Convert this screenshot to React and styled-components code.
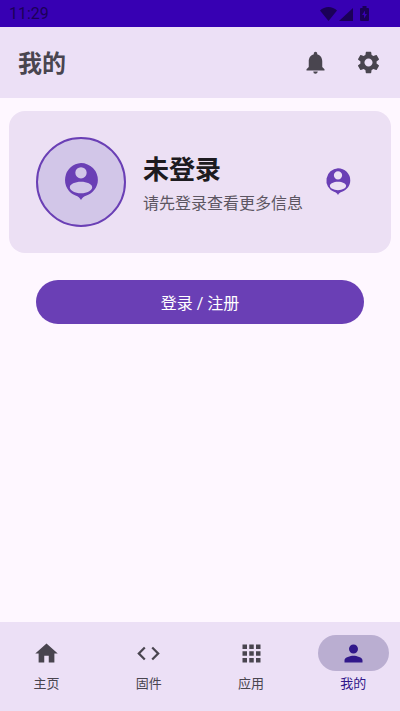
import React from 'react';
import styled, { createGlobalStyle } from 'styled-components';
import { MdApps, MdCode, MdHome, MdNotifications, MdPerson, MdSettings } from 'react-icons/md';

const tabs = [
  { label: '主页', icon: MdHome },
  { label: '固件', icon: MdCode },
  { label: '应用', icon: MdApps },
  { label: '我的', icon: MdPerson, active: true },
];

const PersonPin = ({ size }) => (
  <svg width={size} height={size} viewBox="0 0 24 24" fill="currentColor" aria-hidden="true">
    <path
      fillRule="evenodd"
      d="M12 1.700a9.200 9.200 0 0 1 9.200 9.200c0 3.900-2.700 7.200-6.200 8.500-1.500.5-2.300 1.200-3 2.400-.7-1.200-1.500-1.900-3-2.400A9.200 9.200 0 0 1 12 1.700zm0 2.200a3.100 3.100 0 1 0 0 6.200 3.100 3.100 0 0 0 0-6.200zm0 8c-3.200 0-6.100 1.300-6.100 3 0 1.700 2.800 3.300 6.100 3.300s6.100-1.600 6.100-3.300c0-1.700-2.900-3-6.100-3z"
    />
  </svg>
);

const StatusIcons = () => (
  <svg width="50" height="16" viewBox="0 0 50 16" aria-hidden="true">
    <path d="M0 4.500C4.500-.2 12.500-.2 17 4.500L8.500 15z" fill="#1b0058" />
    <path d="M33 2v13H19z" fill="#1b0058" />
    <path d="M42.500 0h4v2H48q1 0 1 1v11q0 1-1 1h-7q-1 0-1-1V3q0-1 1-1h1.500z" fill="#1b0058" />
    <path d="M45 4.500l-3 4.500h2v3.500l3-4.500h-2z" fill="#3700b3" />
  </svg>
);

const App = () => {
  return (
    <>
      <GlobalStyle />
      <Page>
        <StatusBar>
          <span>11:29</span>
          <StatusIcons />
        </StatusBar>
        <Header>
          <Title>我的</Title>
          <Actions>
            <IconButton aria-label="通知">
              <MdNotifications size={27} />
            </IconButton>
            <IconButton aria-label="设置">
              <MdSettings size={27} />
            </IconButton>
          </Actions>
        </Header>
        <Main>
          <Card>
            <Avatar>
              <PersonPin size={44} />
            </Avatar>
            <Info>
              <Name>未登录</Name>
              <Hint>请先登录查看更多信息</Hint>
            </Info>
            <ProfileButton aria-label="个人资料">
              <PersonPin size={32} />
            </ProfileButton>
          </Card>
          <LoginButton>登录 / 注册</LoginButton>
        </Main>
        <Nav>
          {tabs.map(({ label, icon: Icon, active }) => (
            <Tab key={label} $active={active} aria-current={active ? 'page' : undefined}>
              <Pill $active={active}>
                <Icon size={27} />
              </Pill>
              <span>{label}</span>
            </Tab>
          ))}
        </Nav>
      </Page>
    </>
  );
};

export default App;

const GlobalStyle = createGlobalStyle`
  * {
    box-sizing: border-box;
  }

  body {
    margin: 0;
    background-color: #fef7ff;
    font-family: Roboto, "Noto Sans CJK SC", sans-serif;
  }

  button {
    padding: 0;
    border: none;
    background: none;
    font-family: inherit;
    cursor: pointer;
  }

  svg {
    display: block;
  }
`;

const Page = styled.div`
  display: flex;
  flex-direction: column;
  min-height: 100vh;
`;

// status bar
const StatusBar = styled.div`
  display: flex;
  align-items: center;
  justify-content: space-between;
  height: 27px;
  padding: 0 30px 0 9px;
  background-color: #3700b3;
  color: #1b0058;
  font-size: 16px;
`;

// header
const Header = styled.header`
  display: flex;
  align-items: center;
  justify-content: space-between;
  height: 71px;
  padding: 0 18px;
  background-color: #ece0f6;
  color: #49454f;
`;

const Title = styled.h1`
  margin: 0;
  padding-top: 2px;
  font-size: 24px;
  line-height: 32px;
  font-weight: bold;
`;

const Actions = styled.div`
  display: flex;
  gap: 26px;
`;

const IconButton = styled.button`
  color: #49454f;
`;

// main
const Main = styled.main`
  flex: 1;
  display: flex;
  flex-direction: column;
  padding: 13px 9px;
`;

const Card = styled.section`
  display: flex;
  align-items: center;
  padding: 26px 27px;
  border-radius: 16px;
  background-color: #ece0f4;
`;

const Avatar = styled.div`
  display: flex;
  align-items: center;
  justify-content: center;
  width: 90px;
  height: 90px;
  border: 2px solid #6a3fb5;
  border-radius: 50%;
  background-color: #d2c6e8;
  color: #6a3fb5;
`;

const Info = styled.div`
  flex: 1;
  padding: 8px 0 0 17px;
`;

const Name = styled.h2`
  margin: 0;
  color: #1d1b20;
  font-size: 26px;
  line-height: 36px;
  font-weight: bold;
`;

const Hint = styled.p`
  margin: 0;
  color: #5c5662;
  font-size: 16px;
  line-height: 32px;
`;

const ProfileButton = styled.button`
  padding-right: 10px;
  color: #6a3fb5;
`;

const LoginButton = styled.button`
  height: 44px;
  margin: 27px;
  border-radius: 22px;
  && {
    background-color: #6a3fb5;
  }
  color: #fff;
  font-size: 16px;
`;

// bottom navigation
const Nav = styled.nav`
  display: flex;
  gap: 9px;
  height: 89px;
  background-color: #ece0f6;
`;

const Tab = styled.button`
  flex: 1;
  display: flex;
  flex-direction: column;
  align-items: center;
  padding-top: 13px;
  color: ${({ $active }) => ($active ? '#31188a' : '#49454f')};
  font-size: 13px;
  line-height: 26px;
`;

const Pill = styled.div`
  display: flex;
  align-items: center;
  justify-content: center;
  width: 71px;
  height: 36px;
  border-radius: 18px;
  background-color: ${({ $active }) => ($active ? '#baaed1' : 'transparent')};
`;
